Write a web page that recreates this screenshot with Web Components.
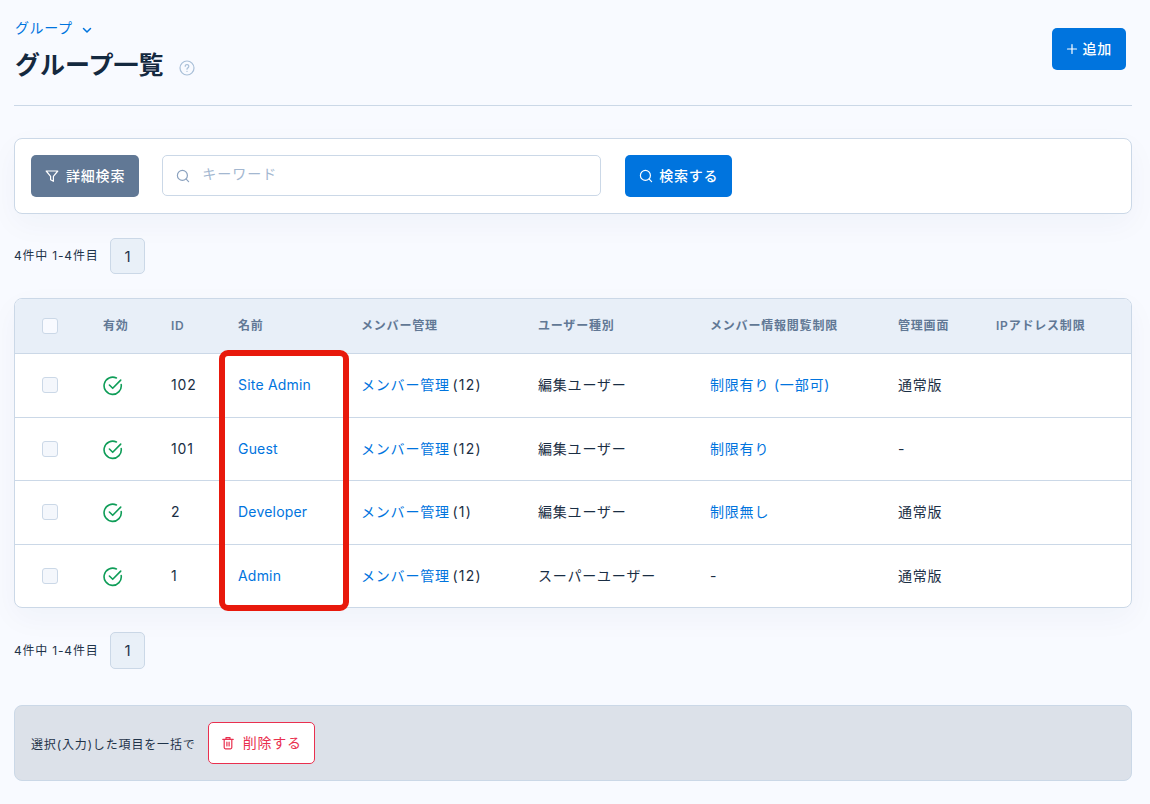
<!DOCTYPE html>
<html lang="ja">
<head>
<meta charset="utf-8">
<title>グループ一覧</title>
<style>
  html, body { margin: 0; background: #f8faff; }
  body {
    font-family: Inter, "Noto Sans CJK JP", sans-serif;
    font-size: 14px;
    color: #1a2e44;
    width: 1150px;
    height: 804px;
    overflow: hidden;
  }
</style>
</head>
<body>
<group-page></group-page>

<script>
const FONT = 'Inter, "Noto Sans CJK JP", sans-serif';
const BLUE = '#0074de';

const icons = {
  chevron: '<svg width="12" height="12" viewBox="0 0 12 12" fill="none" stroke="currentColor" stroke-width="1.5" stroke-linecap="round" stroke-linejoin="round"><path d="M2.5 4.5 6 8l3.5-3.5"/></svg>',
  help: '<svg width="16" height="16" viewBox="0 0 16 16" fill="none" stroke="currentColor" stroke-width="1.2" stroke-linecap="round"><circle cx="8" cy="8" r="7"/><path d="M6.2 6.3a1.8 1.8 0 1 1 2.7 1.6c-.6.3-.9.7-.9 1.3"/><path d="M8 11.4v.1"/></svg>',
  plus: '<svg width="12" height="12" viewBox="0 0 12 12" fill="none" stroke="currentColor" stroke-width="1.2" stroke-linecap="round"><path d="M6 1.5v9M1.5 6h9"/></svg>',
  filter: '<svg width="14" height="14" viewBox="0 0 14 14" fill="none" stroke="currentColor" stroke-width="1.2" stroke-linejoin="round"><path d="M1.2 2h11.6L8.4 7.4v4.9l-2.8-1.6V7.4z"/></svg>',
  search: '<svg width="14" height="14" viewBox="0 0 14 14" fill="none" stroke="currentColor" stroke-width="1.2" stroke-linecap="round"><circle cx="6.4" cy="6.4" r="5"/><path d="m10.2 10.2 2.4 2.4"/></svg>',
  check: '<svg width="20" height="20" viewBox="0 0 20 20" fill="none" stroke="currentColor" stroke-width="1.6" stroke-linecap="round" stroke-linejoin="round"><path d="M18.2 8.6A8.6 8.6 0 1 1 13.4 2"/><path d="m6.4 9 3.3 3.3 8-8.2"/></svg>',
  trash: '<svg width="14" height="14" viewBox="0 0 14 14" fill="none" stroke="currentColor" stroke-width="1.2" stroke-linecap="round" stroke-linejoin="round"><path d="M1.8 3.4h10.4M5 3.2V1.6h4v1.6M3.2 3.4v8.2c0 .7.5 1.2 1.2 1.2h5.2c.7 0 1.2-.5 1.2-1.2V3.4M5.9 6.2v3.8M8.1 6.2v3.8"/></svg>'
};

class UiButton extends HTMLElement {
  constructor () {
    super();
    this.attachShadow({ mode: 'open' });
    const icon = icons[this.getAttribute('icon')] || '';
    this.shadowRoot.innerHTML = `
      <style>
        :host {
          display: inline-flex;
          align-items: center;
          box-sizing: border-box;
          height: 42px;
          padding: 0 var(--pad, 14px) 1px;
          gap: var(--gap, 7px);
          border-radius: 5px;
          font: 500 14px/1 ${FONT};
          letter-spacing: .8px;
          white-space: nowrap;
        }
        :host([kind="primary"]) { background: ${BLUE}; color: #fff; }
        :host([kind="muted"]) { background: #617895; color: #fff; }
        :host([kind="danger"]) { background: #fff; color: #e9304f; border: 1px solid #e9304f; font-weight: 400; }
        svg { display: block; flex: none; }
      </style>
      ${icon}<slot></slot>`;
  }
}

class PageHeader extends HTMLElement {
  constructor () {
    super();
    this.attachShadow({ mode: 'open' });
    this.shadowRoot.innerHTML = `
      <style>
        :host {
          display: flex;
          justify-content: space-between;
          align-items: flex-start;
          box-sizing: border-box;
          height: 78px;
          padding: 0 6px 0 0;
          border-bottom: 1px solid #cbd8e7;
        }
        .crumb { display: flex; align-items: center; gap: 8px; color: ${BLUE}; font-size: 14px; letter-spacing: .6px; line-height: 20px; height: 20px; margin: -10px 0 0 1px; }
        .crumb svg { margin-top: 3px; }
        .title { display: flex; align-items: center; gap: 15px; margin: 9px 0 0 1px; }
        h1 { margin: 0; font-size: 25px; line-height: 36px; font-weight: 700; color: #14293f; }
        .title svg { color: #a9bfd8; margin-top: 5px; }
      </style>
      <div>
        <div class="crumb">グループ ${icons.chevron}</div>
        <div class="title"><h1>グループ一覧</h1>${icons.help}</div>
      </div>
      <ui-button kind="primary" icon="plus" style="--pad:14px;--gap:4px">追加</ui-button>`;
  }
}

class SearchPanel extends HTMLElement {
  constructor () {
    super();
    this.attachShadow({ mode: 'open' });
    this.shadowRoot.innerHTML = `
      <style>
        :host {
          display: flex;
          align-items: flex-start;
          box-sizing: border-box;
          height: 76px;
          margin-top: 32px;
          padding: 16px;
          background: #fff;
          border: 1px solid #cbd8e7;
          border-radius: 8px;
          box-shadow: 0 10px 30px rgba(30, 60, 100, .04);
        }
        .field {
          display: flex;
          align-items: center;
          gap: 12px;
          box-sizing: border-box;
          width: 439px;
          height: 41px;
          margin: 0 24px 0 23px;
          padding: 0 13px 6px;
          border: 1px solid #cbd8e7;
          border-radius: 5px;
          color: #a3b7d0;
          font-size: 14px;
          letter-spacing: 1px;
        }
        .field svg { color: #8ba2bf; margin-top: 6px; }
      </style>
      <ui-button kind="muted" icon="filter" style="--pad:14px">詳細検索</ui-button>
      <div class="field">${icons.search}<span>キーワード</span></div>
      <ui-button kind="primary" icon="search" style="--pad:14px;--gap:6px">検索する</ui-button>`;
  }
}

class PagerBar extends HTMLElement {
  constructor () {
    super();
    this.attachShadow({ mode: 'open' });
    this.shadowRoot.innerHTML = `
      <style>
        :host { display: flex; align-items: center; gap: 12px; font-size: 12px; letter-spacing: .8px; color: #1f3349; height: 36px; }
        span { margin-top: -3px; }
        b {
          display: flex;
          align-items: center;
          justify-content: center;
          align-self: stretch;
          box-sizing: border-box;
          width: 35px;
          background: #e9f0f8;
          border: 1px solid #cbd8e7;
          border-radius: 5px;
          font: 400 15px ${FONT};
        }
      </style>
      <span>4件中 1-4件目</span><b>1</b>`;
  }
}

const COLUMNS = '88px 68px 67px 123px 177px 172px 188px 98px 1fr';

class GroupRow extends HTMLElement {
  constructor () {
    super();
    this.attachShadow({ mode: 'open' });
    const d = JSON.parse(this.getAttribute('data-row'));
    const cells = [
      '<i class="box"></i>',
      `<span class="ok">${icons.check}</span>`,
      `<span>${d.id}</span>`,
      `<a class="name">${d.name}</a>`,
      `<span><a>メンバー管理</a> <span class="count">(${d.count})</span></span>`,
      `<span>${d.type}</span>`,
      d.limit === '-' ? '<span>-</span>' : `<a>${d.limit}</a>`,
      `<span>${d.ui}</span>`,
      '<span></span>'
    ];
    this.shadowRoot.innerHTML = `
      <style>
        :host {
          display: grid;
          grid-template-columns: ${COLUMNS};
          align-items: center;
          box-sizing: border-box;
          height: var(--h, 63.5px);
          border-top: 1px solid #cbd8e7;
          font-size: 14px;
          line-height: 20px;
          letter-spacing: .8px;
          color: #1a2e44;
          white-space: nowrap;
        }
        .box {
          display: block;
          box-sizing: border-box;
          width: 16px;
          height: 16px;
          margin-left: 27px;
          background: #f4f7fc;
          border: 1px solid #cbd8e7;
          border-radius: 3px;
        }
        .ok { color: #0f9d58; display: block; height: 20px; margin-top: 2px; }
        .ok svg { display: block; }
        a { color: ${BLUE}; }
        a.name { letter-spacing: .2px; }
        .count { letter-spacing: 1.2px; margin-left: -2px; }
      </style>
      ${cells.join('')}`;
  }
}

class GroupTable extends HTMLElement {
  constructor () {
    super();
    this.attachShadow({ mode: 'open' });
    const heads = ['有効', 'ID', '名前', 'メンバー管理', 'ユーザー種別', 'メンバー情報閲覧制限', '管理画面', 'IPアドレス制限'];
    const rows = [
      { id: 102, name: 'Site Admin', count: 12, type: '編集ユーザー', limit: '制限有り (一部可)', ui: '通常版' },
      { id: 101, name: 'Guest', count: 12, type: '編集ユーザー', limit: '制限有り', ui: '-' },
      { id: 2, name: 'Developer', count: 1, type: '編集ユーザー', limit: '制限無し', ui: '通常版' },
      { id: 1, name: 'Admin', count: 12, type: 'スーパーユーザー', limit: '-', ui: '通常版' }
    ];
    this.shadowRoot.innerHTML = `
      <style>
        :host {
          display: block;
          position: relative;
          box-sizing: border-box;
          height: 310px;
          margin-top: 24px;
          background: #fff;
          border: 1px solid #cbd8e7;
          border-radius: 8px;
          box-shadow: 0 10px 30px rgba(30, 60, 100, .04);
        }
        .head {
          display: grid;
          grid-template-columns: ${COLUMNS};
          align-items: center;
          box-sizing: border-box;
          height: 54px;
          padding-bottom: 1px;
          background: #e8eff8;
          border-radius: 7px 7px 0 0;
          font-size: 12px;
          line-height: 18px;
          letter-spacing: .8px;
          font-weight: 600;
          color: #617895;
          white-space: nowrap;
        }
        .box {
          display: block;
          box-sizing: border-box;
          width: 16px;
          height: 16px;
          margin-left: 27px;
          background: #f8faff;
          border: 1px solid #cbd8e7;
          border-radius: 3px;
        }
        .mark {
          position: absolute;
          left: 204px;
          top: 51px;
          width: 130px;
          height: 261px;
          box-sizing: border-box;
          border: 6px solid #e8190c;
          border-radius: 9px;
          pointer-events: none;
        }
      </style>
      <div class="head"><i class="box"></i>${heads.map(h => `<span>${h}</span>`).join('')}</div>
      ${rows.map(r => `<group-row data-row='${JSON.stringify(r)}'></group-row>`).join('')}
      <div class="mark"></div>`;
  }
}

class BulkBar extends HTMLElement {
  constructor () {
    super();
    this.attachShadow({ mode: 'open' });
    this.shadowRoot.innerHTML = `
      <style>
        :host {
          display: flex;
          align-items: center;
          gap: 12px;
          box-sizing: border-box;
          height: 76px;
          margin-top: 36px;
          padding: 0 16px;
          background: #dce1e9;
          border: 1px solid #cbd8e7;
          border-radius: 8px;
          font-size: 12px;
          letter-spacing: .85px;
          color: #1f3349;
        }
      </style>
      <span>選択(入力)した項目を一括で</span>
      <ui-button kind="danger" icon="trash" style="--pad:12px;--gap:8px">削除する</ui-button>`;
  }
}

class GroupPage extends HTMLElement {
  constructor () {
    super();
    this.attachShadow({ mode: 'open' });
    this.shadowRoot.innerHTML = `
      <style>
        :host { display: block; box-sizing: border-box; width: 1118px; margin: 28px 0 0 14px; }
        .top { margin-top: 24px; }
        .bottom { margin-top: 24px; height: 37px; }
      </style>
      <page-header></page-header>
      <search-panel></search-panel>
      <pager-bar class="top"></pager-bar>
      <group-table></group-table>
      <pager-bar class="bottom"></pager-bar>
      <bulk-bar></bulk-bar>`;
  }
}

customElements.define('ui-button', UiButton);
customElements.define('page-header', PageHeader);
customElements.define('search-panel', SearchPanel);
customElements.define('pager-bar', PagerBar);
customElements.define('group-row', GroupRow);
customElements.define('group-table', GroupTable);
customElements.define('bulk-bar', BulkBar);
customElements.define('group-page', GroupPage);
</script>
</body>
</html>
